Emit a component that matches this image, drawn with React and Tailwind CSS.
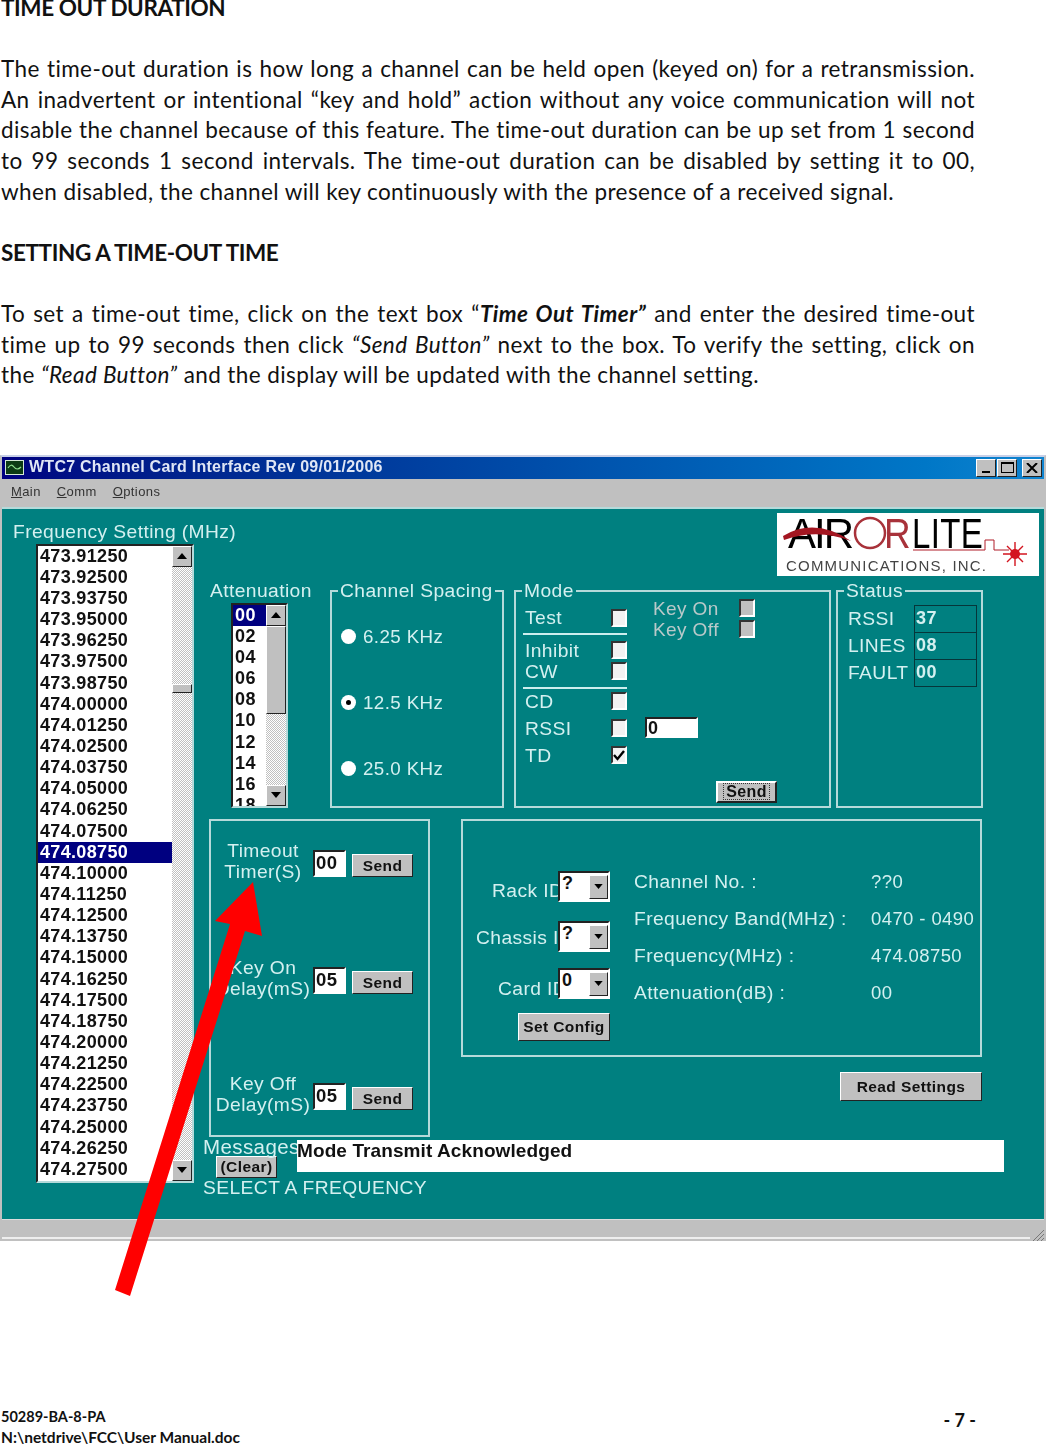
import React from 'react';

const TEAL = 'bg-[#008080]';

const freqs = ['473.91250','473.92500','473.93750','473.95000','473.96250','473.97500','473.98750','474.00000','474.01250','474.02500','474.03750','474.05000','474.06250','474.07500','474.08750','474.10000','474.11250','474.12500','474.13750','474.15000','474.16250','474.17500','474.18750','474.20000','474.21250','474.22500','474.23750','474.25000','474.26250','474.27500'];
const atten = ['00','02','04','06','08','10','12','14','16','18'];

const raised = 'border border-t-white border-l-white border-r-[#222] border-b-[#222] bg-[#c0c0c0]';
const sunken = 'border-2 border-t-[#222] border-l-[#222] border-r-white border-b-white bg-white';

const Arrow = ({ up }) => (
  <div className={`${raised} flex h-[21px] w-[20px] shrink-0 items-center justify-center`}>
    <svg width="10" height="6" viewBox="0 0 10 6" className={up ? '' : 'rotate-180'}>
      <path d="M5 0 L10 6 L0 6 Z" fill="#000" />
    </svg>
  </div>
);

const Group = ({ label, className, children }) => (
  <div className={`border-2 border-[#b5dada] ${className}`}>
    {label && <div className={`-mt-[11px] ml-[6px] w-fit ${TEAL} px-[2px] leading-[20px]`}>{label}</div>}
    {children}
  </div>
);

const Btn = ({ children, className }) => (
  <div className={`${raised} flex items-center justify-center text-[15.5px] font-bold text-[#111] ${className}`}>{children}</div>
);

const Radio = ({ label, on }) => (
  <div className="flex items-center gap-[7px] text-[18.75px]">
    <div className="flex h-[15px] w-[15px] items-center justify-center rounded-full bg-white">
      {on && <div className="h-[5px] w-[5px] rounded-full bg-black" />}
    </div>
    <span>{label}</span>
  </div>
);

const Check = ({ on, off }) => (
  <div className={`flex h-[18px] w-[16px] shrink-0 items-center justify-center border-2 border-t-[#333] border-l-[#333] border-r-white border-b-white ${off ? 'bg-[#c0c0c0]' : 'bg-[#f2f2f2]'}`}>
    {on && (
      <svg width="12" height="11" viewBox="0 0 12 11">
        <path d="M1 5 L4.5 9 L11 1" fill="none" stroke="#000" strokeWidth="2.4" />
      </svg>
    )}
  </div>
);

const ModeRow = ({ label, on, className }) => (
  <div className={`flex items-center ${className}`}>
    <span className="w-[87px]">{label}</span>
    <Check on={on} />
  </div>
);

const TimerRow = ({ l1, l2, value, className }) => (
  <div className={`flex items-start ${className}`}>
    <div className="w-[104px] text-center leading-[21px] whitespace-nowrap">
      <div>{l1}</div>
      <div>{l2}</div>
    </div>
    <div className={`${sunken} mt-[10px] -ml-[2px] h-[27px] w-[33px] pl-[1px] text-[18.5px] leading-[22px] font-bold text-[#111]`}>{value}</div>
    <Btn className="mt-[14px] ml-[6px] h-[23px] w-[61px]">Send</Btn>
  </div>
);

const Combo = ({ label, value, labelClass, className }) => (
  <div className={`flex h-[31px] items-start ${className}`}>
    <span className={`w-[95px] shrink-0 overflow-hidden whitespace-nowrap ${labelClass}`}>{label}</span>
    <div className={`${sunken} flex h-[31px] w-[52px] shrink-0 items-start`}>
      <span className="flex-1 pl-[2px] text-[18px] leading-[20px] font-bold text-[#111]">{value}</span>
      <div className={`${raised} mt-[2px] flex h-[24px] w-[19px] items-center justify-center`}>
        <svg width="9" height="5" viewBox="0 0 10 6"><path d="M0 0 L10 0 L5 6 Z" fill="#000" /></svg>
      </div>
    </div>
  </div>
);

const Info = ({ label, value }) => (
  <div className="flex h-[37px] items-center">
    <span className="w-[237px] whitespace-nowrap">{label}</span>
    <span className="text-[18.5px] whitespace-nowrap">{value}</span>
  </div>
);

const Status = ({ label, value, className }) => (
  <div className={`flex items-center ${className}`}>
    <span className="w-[66px] whitespace-nowrap">{label}</span>
    <div className="flex h-[28px] w-[63px] items-center border border-[#06363a] pl-[1px] text-[18px] font-bold">{value}</div>
  </div>
);

const Logo = () => (
  <svg viewBox="0 0 262 63" width="262" height="63" fontFamily="Liberation Sans">
    <circle cx="93" cy="20" r="15" fill="none" stroke="#a8323a" strokeWidth="2.5" />
    <text x="11" y="35" fontSize="42" letterSpacing="-2" fill="#000">AIR</text>
    <text x="107" y="35" fontSize="42" textLength="27" lengthAdjust="spacingAndGlyphs" fill="#a8323a">R</text>
    <text x="135" y="35" fontSize="42" textLength="71" lengthAdjust="spacingAndGlyphs" fill="#000">LITE</text>
    <path d="M6 23 Q38 4 74 28 Q40 15 7 27 Z" fill="#a31621" />
    <text x="9" y="58" fontSize="15" letterSpacing="1.2" fill="#444">COMMUNICATIONS, INC.</text>
    <path d="M136 37 H208 V27 H217 V37 H232" fill="none" stroke="#b01c28" strokeWidth="1" />
    <path d="M238 29 V53 M226 41 H250 M230 33 L246 49 M246 33 L230 49" stroke="#d3141f" strokeWidth="1.4" />
    <circle cx="238" cy="41" r="5" fill="#d3141f" />
  </svg>
);

function AppWindow() {
  return (
    <div className="mt-[64px] border-2 border-b-0 border-x-[#c0c0c0] border-t-[#c8d0e8] bg-[#c0c0c0] font-['Liberation_Sans',sans-serif] blur-[0.35px]">
      {/* title bar */}
      <div className="flex h-[22px] items-center bg-gradient-to-r from-[#000080] to-[#1084d0] pr-[2px] pl-[3px]">
        <svg width="19" height="15" viewBox="0 0 19 15" className="shrink-0">
          <rect x="0.5" y="0.5" width="18" height="14" fill="#0c3b14" stroke="#d5e8d5" />
          <path d="M3 8 Q6 3 9 7 T16 7" fill="none" stroke="#8fe08f" strokeWidth="1.2" />
        </svg>
        <span className="ml-[5px] text-[16px] font-bold tracking-[0.25px] text-[#dfe6f5]">WTC7 Channel Card Interface Rev 09/01/2006</span>
        <div className="ml-auto flex gap-[1px]">
          <div className={`${raised} flex h-[18px] w-[20px] items-end pb-[3px] pl-[5px]`}><div className="h-[2px] w-[8px] bg-black" /></div>
          <div className={`${raised} flex h-[18px] w-[20px] items-center justify-center`}><div className="h-[11px] w-[13px] border border-t-2 border-black" /></div>
          <div className={`${raised} ml-[4px] flex h-[18px] w-[20px] items-center justify-center`}>
            <svg width="12" height="10" viewBox="0 0 12 10"><path d="M1 0 L11 10 M11 0 L1 10" stroke="#000" strokeWidth="2" /></svg>
          </div>
        </div>
      </div>
      {/* menu */}
      <div className="flex h-[28px] items-center gap-[16px] pl-[9px] text-[13px] text-[#333]">
        <span><u>M</u>ain</span>
        <span><u>C</u>omm</span>
        <span><u>O</u>ptions</span>
      </div>
      {/* form */}
      <div className={`flex h-[712px] border-t-2 border-[#b5dada] ${TEAL} text-[19.25px] leading-[21px] text-[#d4f0f0]`}>
        <div className="w-[201px] shrink-0 pt-[12px]">
          <div className="ml-[11px] leading-[22px] whitespace-nowrap">Frequency Setting (MHz)</div>
          <div className="mt-[1px] ml-[34px] flex h-[639px] w-[158px] border-2 border-t-[#222] border-l-[#222] border-r-[#b5dada] border-b-[#b5dada]">
            <div className="w-[136px] overflow-hidden bg-white text-[18px] font-bold tracking-[0.33px] text-[#111]">
              {freqs.map(f => (
                <div key={f} className={`h-[21.15px] pl-[2px] leading-[21px] ${f === '474.08750' ? 'bg-[#000080] text-white' : ''}`}>{f}</div>
              ))}
            </div>
            <div className="relative flex flex-1 flex-col justify-between bg-[repeating-conic-gradient(#c0c0c0_0_25%,#fff_0_50%)] bg-[length:2px_2px]">
              <Arrow up />
              <div className={`${raised} absolute top-[138px] h-[9px] w-[20px]`} />
              <Arrow />
            </div>
          </div>
        </div>

        <div className="flex-1 pt-[4px]">
          <div className="ml-[574px] h-[63px] w-[262px] bg-white">
            <Logo />
          </div>

          {/* top row */}
          <div className="mt-[13px] flex items-start">
            <div className="ml-[7px] w-[102px]">
              <div className="-mt-[8px] h-[20px] leading-[20px] whitespace-nowrap">Attenuation</div>
              <div className="mt-[2px] ml-[21px] flex h-[205px] w-[57px] border-2 border-t-[#222] border-l-[#222] border-r-[#b5dada] border-b-[#b5dada]">
                <div className="w-[33px] overflow-hidden bg-white text-[18px] font-bold text-[#111]">
                  {atten.map(a => (
                    <div key={a} className={`h-[21.15px] pl-[2px] leading-[21px] ${a === '00' ? 'bg-[#000080] text-white' : ''}`}>{a}</div>
                  ))}
                </div>
                <div className="relative flex flex-1 flex-col justify-between bg-[repeating-conic-gradient(#c0c0c0_0_25%,#fff_0_50%)] bg-[length:2px_2px]">
                  <Arrow up />
                  <div className={`${raised} absolute top-[21px] h-[88px] w-[20px] bg-[#bdbdbd]`} />
                  <Arrow />
                </div>
              </div>
            </div>

            <Group label="Channel Spacing" className="mt-[1px] ml-[18px] h-[218px] w-[174px]">
              <div className="mt-[25px] ml-[9px] flex flex-col gap-[45px]">
                <Radio label="6.25 KHz" />
                <Radio label="12.5 KHz" on />
                <Radio label="25.0 KHz" />
              </div>
            </Group>

            <Group label="Mode" className="mt-[1px] ml-[10px] h-[218px] w-[317px]">
              <div className="flex">
                <div className="ml-[9px] w-[102px]">
                  <ModeRow label="Test" className="mt-[7px] h-[20px]" />
                  <div className="mt-[5px] -ml-[2px] h-[2px] w-[104px] bg-[#cdeeee]" />
                  <ModeRow label="Inhibit" className="mt-[5px] h-[21px]" />
                  <ModeRow label="CW" className="h-[21px]" />
                  <div className="mt-[5px] -ml-[2px] h-[2px] w-[104px] bg-[#cdeeee]" />
                  <ModeRow label="CD" className="mt-[2px] h-[21px]" />
                  <ModeRow label="RSSI" className="mt-[6px] h-[21px]" />
                  <ModeRow label="TD" on className="mt-[6px] h-[21px]" />
                </div>
                <div className="ml-[26px]">
                  <div className="-mt-[3px] flex h-[21px] items-center text-[19px] text-[#b9c9c9]">
                    <span className="w-[86px]">Key On</span>
                    <Check off />
                  </div>
                  <div className="flex h-[21px] items-center text-[19px] text-[#b9c9c9]">
                    <span className="w-[86px]">Key Off</span>
                    <Check off />
                  </div>
                  <div className={`${sunken} mt-[77px] -ml-[8px] h-[21px] w-[53px] pl-[1px] text-[18px] leading-[18px] font-bold text-[#111]`}>0</div>
                  <div className={`${raised} mt-[43px] ml-[63px] flex h-[22px] w-[61px] items-center justify-center border-2 border-[#111] text-[16px] font-bold text-[#111]`}>
                    <span className="border border-dotted border-[#333] px-[2px] leading-[15px]">Send</span>
                  </div>
                </div>
              </div>
            </Group>

            <Group label="Status" className="mt-[1px] ml-[5px] h-[218px] w-[147px]">
              <div className="mt-[4px] ml-[10px]">
                <Status label="RSSI" value="37" />
                <Status label="LINES" value="08" className="-mt-[1px]" />
                <Status label="FAULT" value="00" className="-mt-[1px]" />
              </div>
            </Group>
          </div>

          {/* bottom row */}
          <div className="mt-[11px] flex items-start">
            <Group className="ml-[6px] h-[318px] w-[221px] pt-[19px]">
              <TimerRow l1="Timeout" l2="Timer(S)" value="00" />
              <TimerRow l1="Key On" l2="Delay(mS)" value="05" className="mt-[75px]" />
              <TimerRow l1="Key Off" l2="Delay(mS)" value="05" className="mt-[74px]" />
            </Group>

            <div className="ml-[31px] w-[521px]">
              <Group className="h-[238px] w-[521px]">
                <div className="flex pt-[50px]">
                  <div className="w-[147px] shrink-0">
                    <Combo label="Rack ID" value="?" labelClass="pt-[9px] pl-[29px]" />
                    <Combo label="Chassis ID" value="?" labelClass="pt-[6px] pl-[13px]" className="mt-[19px]" />
                    <Combo label="Card ID" value="0" labelClass="pt-[10px] pl-[35px]" className="mt-[16px]" />
                    <Btn className="mt-[14px] ml-[55px] h-[28px] w-[92px]">Set Config</Btn>
                  </div>
                  <div className="ml-[24px] -mt-[8px]">
                    <Info label="Channel No. :" value="??0" />
                    <Info label="Frequency Band(MHz) :" value="0470 - 0490" />
                    <Info label="Frequency(MHz) :" value="474.08750" />
                    <Info label="Attenuation(dB) :" value="00" />
                  </div>
                </div>
              </Group>
              <Btn className="mt-[15px] ml-[379px] h-[29px] w-[142px]">Read Settings</Btn>
            </div>
          </div>

          {/* messages */}
          <div className="flex items-start">
            <div className="w-[94px] shrink-0">
              <div className="text-[20.5px] leading-[20px] whitespace-nowrap">Messages</div>
              <Btn className="-mt-[1px] ml-[13px] h-[22px] w-[61px]">(Clear)</Btn>
            </div>
            <div className="mt-[3px] h-[32px] w-[707px] bg-white text-[19px] leading-[22px] font-bold tracking-[0.1px] whitespace-nowrap text-[#111]">Mode Transmit Acknowledged</div>
          </div>
          <div className="leading-[20px] whitespace-nowrap">SELECT A FREQUENCY</div>
        </div>
      </div>
      {/* status bar */}
      <div className="flex h-[22px] items-end border-t border-[#ddd] bg-[#c0c0c0]">
        <div className="mb-[2px] h-[2px] flex-1 bg-[#eee]" />
        <svg width="14" height="14" viewBox="0 0 14 14" className="shrink-0">
          <path d="M3 14 L14 3 M7 14 L14 7 M11 14 L14 11" stroke="#777" strokeWidth="1" />
        </svg>
      </div>
    </div>
  );
}

// each justified line is fixed so the wrapping follows the page
const Line = ({ children }) => <span className="block [text-align-last:justify]">{children}</span>;

export default function App() {
  return (
    <div className="relative h-[1445px] w-[1046px] overflow-hidden bg-white font-['Lato',sans-serif] text-[22.5px] leading-[30.6px] tracking-[0.4px] text-[#111]">
      <div className="-mt-[7px] w-[975px] pl-[1px]">
        <p className="font-bold tracking-[-0.4px]">TIME OUT DURATION</p>
        <p className="mt-[30.6px]">
          <Line>The time-out duration is how long a channel can be held open (keyed on) for a retransmission.</Line>
          <Line>An inadvertent or intentional “key and hold” action without any voice communication will not</Line>
          <Line>disable the channel because of this feature. The time-out duration can be up set from 1 second</Line>
          <Line>to 99 seconds 1 second intervals. The time-out duration can be disabled by setting it to 00,</Line>
          <span className="block">when disabled, the channel will key continuously with the presence of a received signal.</span>
        </p>
        <p className="mt-[30.6px] font-bold tracking-[-0.4px]">SETTING A TIME-OUT TIME</p>
        <p className="mt-[30.6px]">
          <Line>To set a time-out time, click on the text box “<b><i>Time Out Timer”</i></b> and enter the desired time-out</Line>
          <Line>time up to 99 seconds then click <i>“Send Button”</i> next to the box. To verify the setting, click on</Line>
          <span className="block">the <i>“Read Button”</i> and the display will be updated with the channel setting.</span>
        </p>
      </div>

      <AppWindow />

      {/* footer */}
      <div className="mt-[166px] flex items-start justify-between pr-[70px] pl-[1px] text-[15.5px] leading-[20px] font-bold tracking-normal">
        <div>
          <div className="text-[14.5px]">50289-BA-8-PA</div>
          <div>N:\netdrive\FCC\User Manual.doc</div>
        </div>
        <div className="mt-[3px] text-[18px]">- 7 -</div>
      </div>

      {/* red arrow drawn on top of the screenshot */}
      <svg className="absolute top-[870px] left-[100px]" width="180" height="440" viewBox="100 870 180 440">
        <path d="M253 882 L262 936 L245 931 L130 1296 L115 1290 L230 924 L215 921 Z" fill="#ff0000" />
      </svg>
    </div>
  );
}
